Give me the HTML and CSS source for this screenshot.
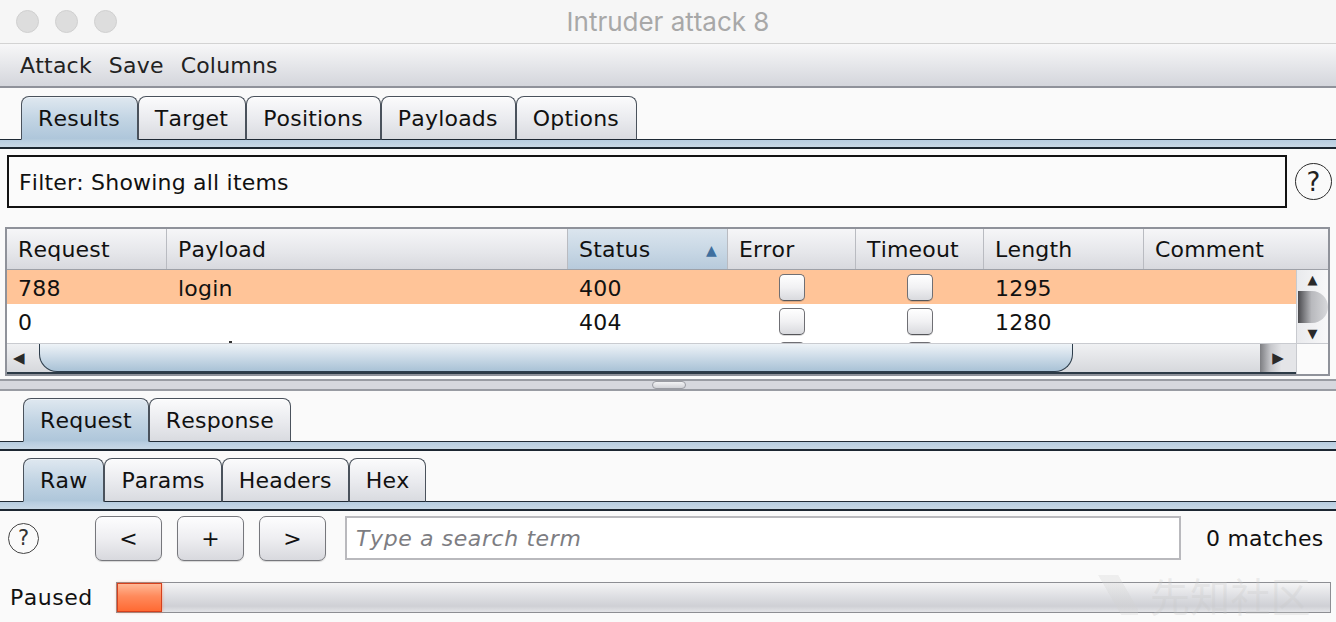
FILE: index.html
```html
<!DOCTYPE html>
<html>
<head>
<meta charset="utf-8">
<title>Intruder attack 8</title>
<link rel="stylesheet" href="styles.css">
</head>
<body>
<div class="window">
  <div class="titlebar">
    <div class="lights"><span class="light"></span><span class="light"></span><span class="light"></span></div>
    <div class="title">Intruder attack 8</div>
    <div class="title-spacer"></div>
  </div>
  <div class="menubar">
    <span>Attack</span><span>Save</span><span>Columns</span>
  </div>

  <div class="tabs main-tabs">
    <div class="tabrow">
      <div class="lead"></div>
      <div class="tab sel">Results</div>
      <div class="tab">Target</div>
      <div class="tab">Positions</div>
      <div class="tab">Payloads</div>
      <div class="tab">Options</div>
      <div class="fill"></div>
    </div>
    <div class="strip"></div>
  </div>

  <div class="filter-row">
    <div class="filter">Filter: Showing all items</div>
    <div class="help big">?</div>
  </div>

  <div class="table">
    <div class="thead">
      <div class="th">Request</div>
      <div class="th">Payload</div>
      <div class="th sorted">Status<span class="arrow">▲</span></div>
      <div class="th">Error</div>
      <div class="th">Timeout</div>
      <div class="th">Length</div>
      <div class="th last">Comment</div>
    </div>
    <div class="body">
      <div class="rows">
        <div class="tr hl">
          <div class="td">788</div>
          <div class="td">login</div>
          <div class="td">400</div>
          <div class="td c"><span class="cb"></span></div>
          <div class="td c"><span class="cb"></span></div>
          <div class="td">1295</div>
          <div class="td"></div>
        </div>
        <div class="tr">
          <div class="td">0</div>
          <div class="td"></div>
          <div class="td">404</div>
          <div class="td c"><span class="cb"></span></div>
          <div class="td c"><span class="cb"></span></div>
          <div class="td">1280</div>
          <div class="td"></div>
        </div>
        <div class="tr">
          <div class="td"></div>
          <div class="td"><span class="dot"></span></div>
          <div class="td"></div>
          <div class="td c"><span class="cb"></span></div>
          <div class="td c"><span class="cb"></span></div>
          <div class="td"></div>
          <div class="td"></div>
        </div>
      </div>
      <div class="vscroll">
        <div class="vbtn">▲</div>
        <div class="vtrack"><div class="vthumb"></div></div>
        <div class="vbtn">▼</div>
      </div>
    </div>
    <div class="hscroll">
      <div class="hbtn left">◀</div>
      <div class="htrack"><div class="hthumb"></div></div>
      <div class="hbtn right">▶</div>
      <div class="corner"></div>
    </div>
  </div>

  <div class="splitter"><div class="grip"></div></div>

  <div class="tabs sub-tabs">
    <div class="tabrow">
      <div class="lead"></div>
      <div class="tab sel">Request</div>
      <div class="tab">Response</div>
      <div class="fill"></div>
    </div>
    <div class="strip"></div>
  </div>

  <div class="tabs sub-tabs second">
    <div class="tabrow">
      <div class="lead"></div>
      <div class="tab sel">Raw</div>
      <div class="tab">Params</div>
      <div class="tab">Headers</div>
      <div class="tab">Hex</div>
      <div class="fill"></div>
    </div>
    <div class="strip"></div>
  </div>

  <div class="search-row">
    <div class="help small">?</div>
    <div class="buttons">
      <div class="btn">&lt;</div>
      <div class="btn">+</div>
      <div class="btn">&gt;</div>
    </div>
    <div class="search">Type a search term</div>
    <div class="matches">0 matches</div>
  </div>

  <div class="status-row">
    <div class="paused">Paused</div>
    <div class="progress"><div class="done"></div></div>
    <div class="watermark"><span class="mark"></span>先知社区</div>
  </div>
</div>
</body>
</html>
```

FILE: styles.css
```css
html, body {
  margin: 0;
  padding: 0;
}
body {
  width: 1336px;
  height: 622px;
  overflow: hidden;
  background: #fafafa;
  font-family: "DejaVu Sans", "Noto Sans", sans-serif;
  font-size: 22px;
  font-kerning: none;
  letter-spacing: 0.2px;
  color: #111;
}
.window {
  display: flex;
  flex-direction: column;
  height: 622px;
  position: relative;
}

/* title bar */
.titlebar {
  height: 43px;
  background: #f6f6f6;
  border-bottom: 1px solid #d3d3d3;
  display: grid;
  grid-template-columns: 1fr auto 1fr;
  align-items: center;
}
.lights {
  display: flex;
  gap: 16px;
  padding-left: 16px;
}
.light {
  width: 23px;
  height: 23px;
  border-radius: 50%;
  background: #dddddd;
  border: 1px solid #d0d0d0;
  box-sizing: border-box;
}
.title {
  font-family: "Inter", "Liberation Sans", sans-serif;
  font-size: 26px;
  letter-spacing: 0;
  color: #a8a8a8;
  padding-bottom: 1px;
}

/* menu */
.menubar {
  height: 42px;
  background: linear-gradient(#f7f7f8, #d4d6dc);
  border-bottom: 2px solid #8f929a;
  display: flex;
  align-items: center;
  gap: 17px;
  padding-left: 20px;
  color: #222;
}

/* tabs */
.tabs { display: flex; flex-direction: column; }
.main-tabs { margin-top: 8px; }
.tabrow {
  display: flex;
  align-items: flex-end;
  height: 44px;
}
.lead {
  width: 21px;
  flex: none;
  border-bottom: 1px solid #1f2a35;
}
.fill {
  flex: 1;
  border-bottom: 1px solid #1f2a35;
}
.tab {
  box-sizing: border-box;
  height: 44px;
  padding: 0 17px 0 16px;
  display: flex;
  align-items: center;
  border: 1px solid #4a525c;
  border-bottom: 1px solid #1f2a35;
  border-radius: 8px 8px 0 0;
  background: linear-gradient(#fbfbfc, #e9eaee 55%, #d9dbe0);
  box-shadow: inset 0 1px 0 #ffffff;
  color: #111;
}
.tab.sel {
  background: linear-gradient(#dfe8f0, #c3d5e4 50%, #aec6da);
  border-bottom-color: #b3cadc;
  box-shadow: inset 0 1px 0 #eef3f7;
}
.strip {
  height: 7px;
  background: linear-gradient(#b6cce0, #c8d8e6);
  border-bottom: 2px solid #1c2631;
}
.sub-tabs { margin-top: 7px; }
.sub-tabs .lead { width: 23px; }
.sub-tabs .tab { padding: 0 16px; }

/* filter */
.filter-row {
  display: flex;
  align-items: center;
  margin-top: 6px;
  padding-left: 7px;
  height: 53px;
}
.filter {
  box-sizing: border-box;
  width: 1280px;
  height: 53px;
  border: 2px solid #121212;
  background: #fbfbfb;
  display: flex;
  align-items: center;
  padding-left: 10px;
  padding-top: 2px;
}
.help {
  box-sizing: border-box;
  border-radius: 50%;
  border: 2px solid #2a2a2a;
  display: flex;
  align-items: center;
  justify-content: center;
  color: #222;
  font-family: "DejaVu Sans", sans-serif;
  letter-spacing: 0;
}
.help.big {
  width: 37px;
  height: 37px;
  margin-left: 8px;
  font-size: 26px;
  border-width: 1.5px;
}
.help.small {
  width: 31px;
  height: 31px;
  font-size: 21px;
  border-width: 1.5px;
  border-color: #444;
  color: #333;
}

/* table */
.table {
  margin: 19px 6px 0 5px;
  border: 2px solid #8f929a;
  background: #fff;
  display: flex;
  flex-direction: column;
}
.thead {
  display: grid;
  grid-template-columns: 160px 401px 160px 128px 128px 160px 1fr;
  height: 40px;
  border-bottom: 1px solid #9ea1a8;
  background: linear-gradient(#f6f6f8, #e5e6ea 60%, #d8d9de);
}
.th {
  display: flex;
  align-items: center;
  padding-left: 11px;
  padding-top: 1px;
  border-right: 1px solid #b9bbc1;
  color: #111;
}
.th.last { border-right: none; }
.th.sorted {
  background: linear-gradient(#dbe5ee, #c6d6e4 60%, #b7cadb);
  justify-content: space-between;
  padding-right: 10px;
}
.arrow {
  font-size: 14px;
  color: #3f6f9e;
}
.body {
  display: flex;
  height: 73px;
  overflow: hidden;
}
.rows {
  flex: 1;
  overflow: hidden;
}
.tr {
  display: grid;
  grid-template-columns: 160px 401px 160px 128px 128px 160px 1fr;
  height: 34px;
  background: #ffffff;
}
.tr.hl { background: #ffc498; }
.td {
  display: flex;
  align-items: center;
  padding-left: 11px;
  padding-top: 2px;
  white-space: nowrap;
  overflow: hidden;
}
.td.c {
  justify-content: center;
  padding-left: 0;
  padding-top: 0;
}
.dot {
  width: 3px;
  height: 3px;
  margin-left: 51px;
  margin-top: -28px;
  background: #333;
}
.cb {
  box-sizing: border-box;
  width: 26px;
  height: 27px;
  border: 1.5px solid #6f6f74;
  border-bottom-color: #55565a;
  border-radius: 5px;
  background: linear-gradient(#ffffff, #f1f1f3 50%, #d9dade);
  box-shadow: 0 1px 0 rgba(0,0,0,0.15);
}
.vscroll {
  width: 31px;
  flex: none;
  display: flex;
  flex-direction: column;
  border-left: 1px solid #c8cacf;
  background: linear-gradient(90deg, #e9eaed, #f8f8f9);
}
.vbtn {
  height: 19px;
  font-size: 13px;
  color: #2a2a2a;
  display: flex;
  align-items: center;
  justify-content: center;
}
.vtrack {
  flex: 1;
  display: flex;
  align-items: center;
  justify-content: center;
}
.vthumb {
  width: 30px;
  height: 32px;
  border-radius: 0 16px 16px 0;
  background: linear-gradient(90deg, #4a4a4e, #b8b9bd 45%, #d8d9dc);
}
.hscroll {
  height: 28px;
  display: flex;
  border-top: 1px solid #c9cbd0;
  border-bottom: 2px solid #2c3a46;
  background: linear-gradient(#f0f1f3, #d6d8dc);
}
.hbtn {
  display: flex;
  align-items: center;
  font-size: 15px;
  color: #2a2a2a;
}
.hbtn.left {
  width: 26px;
  padding-left: 6px;
}
.hbtn.right {
  width: 36px;
  justify-content: center;
  background: linear-gradient(90deg, #7d7e82, #c7c8cc 30%, #e4e5e8 60%);
}
.htrack {
  flex: 1;
  display: flex;
}
.hthumb {
  width: 1034px;
  height: 28px;
  box-sizing: border-box;
  border-radius: 0 0 18px 18px;
  border: 1.5px solid #2d3d4b;
  border-top: none;
  background: linear-gradient(#eef3f7, #cfdde9 45%, #a9c2d6);
}
.corner {
  width: 31px;
  background: #fbfbfb;
  border-left: 1px solid #c8cacf;
  margin-bottom: -2px;
}

/* splitter */
.splitter {
  margin-top: 3px;
  height: 8px;
  border-top: 2px solid #999ca3;
  border-bottom: 2px solid #999ca3;
  background: #d6d8de;
  display: flex;
  justify-content: center;
}
.grip {
  width: 34px;
  height: 8px;
  margin-left: 2px;
  border-radius: 4px;
  border: 1px solid #9a9ca3;
  background: linear-gradient(#f2f3f5, #d1d3d8);
  box-sizing: border-box;
}

/* search row */
.search-row {
  display: flex;
  align-items: center;
  height: 46px;
  margin-top: 4px;
  padding-left: 8px;
}
.buttons {
  display: flex;
  gap: 15px;
  margin-left: 56px;
}
.btn {
  box-sizing: border-box;
  width: 67px;
  height: 45px;
  border: 1px solid #76777c;
  border-radius: 7px;
  background: linear-gradient(#fdfdfe, #eeeef1 50%, #d8d9de);
  display: flex;
  align-items: center;
  justify-content: center;
  color: #111;
  box-shadow: 0 1px 1px rgba(0,0,0,0.15);
}
.search {
  box-sizing: border-box;
  width: 836px;
  height: 44px;
  margin-left: 19px;
  border: 2px solid #b9b9bd;
  background: #ffffff;
  display: flex;
  align-items: center;
  padding-left: 9px;
  font-style: italic;
  letter-spacing: 0.6px;
  color: #7d7d82;
}
.matches {
  margin-left: 25px;
  color: #111;
}

/* status row */
.status-row {
  display: flex;
  align-items: center;
  margin-top: 21px;
  height: 31px;
  padding-left: 10px;
  position: relative;
}
.paused { width: 106px; letter-spacing: 0.5px; }
.progress {
  box-sizing: border-box;
  width: 1215px;
  height: 31px;
  border: 1px solid #8d8e93;
  background: linear-gradient(#f4f4f5, #dcdde1 50%, #cfd0d5 80%, #e3e4e7);
  display: flex;
}
.done {
  width: 45px;
  height: 29px;
  box-sizing: border-box;
  border: 1px solid #d6401c;
  background: linear-gradient(#ffb896, #ff8a5c 45%, #ff6a33);
  box-shadow: 0 0 3px rgba(255,110,60,0.6);
}
.watermark {
  position: absolute;
  left: 1094px;
  top: -16px;
  display: flex;
  align-items: center;
  gap: 12px;
  font-family: "Noto Sans CJK SC", sans-serif;
  font-size: 40px;
  color: rgba(200,200,200,0.3);
  pointer-events: none;
}
.mark {
  width: 44px;
  height: 40px;
  background: linear-gradient(60deg, transparent 40%, rgba(210,210,210,0.3) 41%, rgba(210,210,210,0.3) 70%, transparent 71%);
}
```
